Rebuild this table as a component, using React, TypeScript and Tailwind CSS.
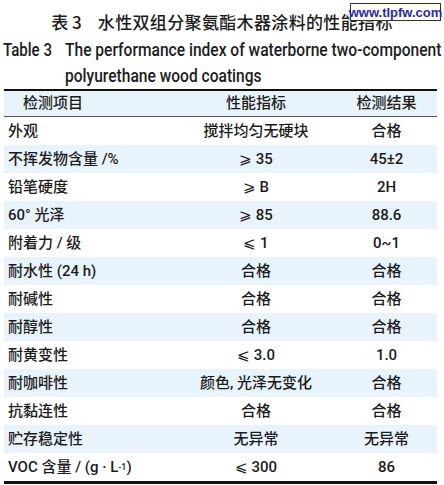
import React from "react";

const FONT = 'Roboto, "Noto Sans CJK SC", sans-serif';
const CJK = '"Noto Sans CJK SC", Roboto, sans-serif';

type Row = [React.ReactNode, React.ReactNode, React.ReactNode];

const rows: Row[] = [
  ["外观", "搅拌均匀无硬块", "合格"],
  ["不挥发物含量 /%", "⩾ 35", "45±2"],
  ["铅笔硬度", "⩾ B", "2H"],
  ["60° 光泽", "⩾ 85", "88.6"],
  ["附着力 / 级", "⩽ 1", "0~1"],
  ["耐水性 (24 h)", "合格", "合格"],
  ["耐碱性", "合格", "合格"],
  ["耐醇性", "合格", "合格"],
  ["耐黄变性", "⩽ 3.0", "1.0"],
  ["耐咖啡性", "颜色, 光泽无变化", "合格"],
  ["抗黏连性", "合格", "合格"],
  ["贮存稳定性", "无异常", "无异常"],
  [
    <span>
      VOC 含量 / (g · L<sup className="text-[9px] relative -top-[2px]">-1</sup>)
    </span>,
    "⩽ 300",
    "86",
  ],
];

export default function App() {
  return (
    <div className="relative w-[444px] h-[485px] bg-white text-[#1c1c1c] overflow-hidden">
      {/* Chinese title */}
      <div
        className="pt-[13px] h-[37px] flex justify-center text-[17px] leading-[18px] font-medium"
        style={{ fontFamily: CJK }}
      >
        <span className="mr-[16px]">表 3</span>
        <span className="tracking-[0.35px]">水性双组分聚氨酯木器涂料的性能指标</span>
      </div>

      {/* watermark */}
      <div
        className="absolute left-[350px] top-[3px] w-[91px] h-[18px] border border-[#333] bg-[#fffff0] flex items-center justify-center text-[13px] font-bold text-[#2a2aa8] leading-none"
        style={{ fontFamily: '"Liberation Sans", sans-serif' }}
      >
        www.tlpfw.com
      </div>

      {/* English title */}
      <div className="flex text-[17.5px] leading-[26px] font-medium" style={{ fontFamily: FONT }}>
        <div className="w-[65px] pl-[3px] shrink-0 whitespace-nowrap">
          <span className="inline-block origin-left scale-x-[0.86]">Table 3</span>
        </div>
        <div className="w-[379px] whitespace-nowrap">
          <div>
            <span className="inline-block origin-left scale-x-[0.89]">
              The performance index of waterborne two-component
            </span>
          </div>
          <div>
            <span className="inline-block origin-left scale-x-[0.89]">polyurethane wood coatings</span>
          </div>
        </div>
      </div>

      {/* table */}
      <div
        className="ml-[4px] w-[433px] border-t-2 border-b-[3px] border-[#111] font-medium"
        style={{ fontFamily: FONT }}
      >
        <div className="grid grid-cols-[172px_160px_101px] h-[26px] items-center bg-[#e9f3fb] border-b border-[#555] text-[15px]">
          <div className="pl-[19px]">检测项目</div>
          <div className="text-center">性能指标</div>
          <div className="text-center">检测结果</div>
        </div>
        {rows.map((r, i) => (
          <div
            key={i}
            className={
              "grid grid-cols-[172px_160px_101px] h-[28px] items-center text-[15px] " +
              (i % 2 === 1 ? "bg-[#e9f3fb]" : "bg-white")
            }
          >
            <div className="pl-[4px] whitespace-nowrap">{r[0]}</div>
            <div className="text-center whitespace-nowrap">{r[1]}</div>
            <div className="text-center whitespace-nowrap">{r[2]}</div>
          </div>
        ))}
      </div>
    </div>
  );
}
